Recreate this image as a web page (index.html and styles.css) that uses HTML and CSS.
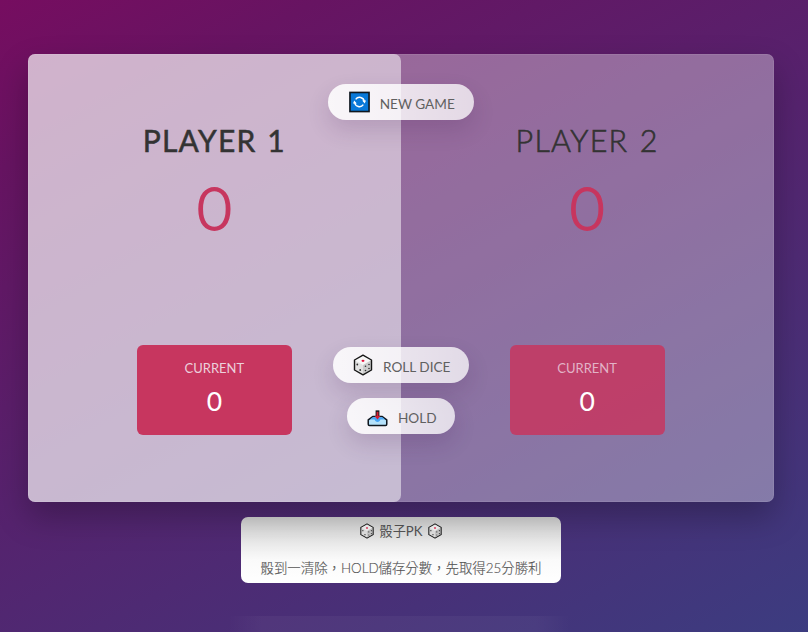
FILE: index.html
```html
<!DOCTYPE html>
<html lang="zh-Hant">
<head>
<meta charset="utf-8">
<title>骰子PK</title>
<link rel="stylesheet" href="styles.css">
</head>
<body>
<svg class="symbols" aria-hidden="true">
  <symbol id="die" viewBox="0 0 20 22">
    <path d="M10 1.2 18.5 6v10L10 20.8 1.5 16V6Z" fill="#f7f7f7"/>
    <path d="M10 11 18.5 6v10L10 20.8Z" fill="#cbcbcb"/>
    <path d="M10 11 1.5 6v10l8.500 4.800Z" fill="#e2e2e2"/>
    <ellipse cx="10" cy="6.800" rx="1.500" ry="1.100" fill="#e3123c"/>
    <g fill="#333"><circle cx="4.300" cy="10.500" r=".9"/><circle cx="7.200" cy="16" r=".9"/><circle cx="12.500" cy="12.300" r=".8"/><circle cx="16" cy="10.500" r=".8"/><circle cx="12.500" cy="16.500" r=".8"/><circle cx="16" cy="14.500" r=".8"/></g>
    <path d="M10 1.2 18.5 6v10L10 20.8 1.5 16V6Z" fill="none" stroke="#161616" stroke-width="1.400" stroke-linejoin="round"/>
  </symbol>
</svg>
<main class="game">
  <section class="player player--active">
    <h2 class="name">PLAYER 1</h2>
    <p class="score">0</p>
    <div class="current"><p class="current-label">CURRENT</p><p class="current-score">0</p></div>
  </section>
  <section class="player">
    <h2 class="name">PLAYER 2</h2>
    <p class="score">0</p>
    <div class="current"><p class="current-label">CURRENT</p><p class="current-score">0</p></div>
  </section>
  <button class="btn btn--new">
    <svg class="icon" viewBox="0 0 22 22"><rect x="1" y="1" width="20" height="20" fill="#0878d8" stroke="#101820" stroke-width="1.700"/><g fill="none" stroke="#fff" stroke-width="1.500"><path d="M7 8.200A5 5 0 0 1 16 10.500"/><path d="M15 13.800A5 5 0 0 1 6 11.500"/></g><path d="M17.800 9.300h-4l2.700 3.400ZM4.200 12.700h4L5.500 9.300Z" fill="#fff"/></svg>
    <span>NEW GAME</span>
  </button>
  <button class="btn btn--roll"><svg class="icon icon--die"><use href="#die"/></svg><span>ROLL DICE</span></button>
  <button class="btn btn--hold">
    <svg class="icon icon--tray" viewBox="0 0 22 22"><path d="M6 9.500h10l4.700 3.500v4.500q0 1.300-1.300 1.300H2.600q-1.300 0-1.300-1.300V13Z" fill="#b5e2fb" stroke="#101820" stroke-width="1.600" stroke-linejoin="round"/><path d="M6 10.300h10l3 2.300h-5c-.6 3.300-5.400 3.300-6 0H3Z" fill="#46a5f5"/><path d="M11 3v6" stroke="#15191d" stroke-width="4"/><path d="M11 4.500v6" stroke="#d51f35" stroke-width="2"/><path d="M8 9h6l-3 3.500Z" fill="#d51f35"/></svg>
    <span>HOLD</span>
  </button>
</main>
<section class="rules">
  <p class="rules-title"><svg class="mini"><use href="#die"/></svg><span>骰子PK</span><svg class="mini"><use href="#die"/></svg></p>
  <p class="rules-text">骰到一清除，HOLD儲存分數，先取得25分勝利</p>
</section>
<div class="dock"></div>
</body>
</html>
```
FILE: styles.css
```css
* { box-sizing: border-box; margin: 0; padding: 0; }
body {
  width: 808px;
  height: 632px;
  padding: 54px 0 0 28px;
  overflow: hidden;
  color: #333;
  font-family: Lato, "Noto Sans CJK TC", sans-serif;
  background: linear-gradient(152deg, #760d60 0%, #671462 16%, #55236e 50%, #3c3c80 100%);
}
.symbols { position: absolute; width: 0; height: 0; }
.game {
  position: relative;
  display: flex;
  width: 745.5px;
  height: 447.5px;
  border-radius: 7px;
  background: rgba(255, 255, 255, .35);
  box-shadow: 0 15px 32px rgba(0, 0, 0, .25), inset 0 0 0 1px rgba(255, 255, 255, .08);
}
.player {
  flex: 1;
  display: flex;
  flex-direction: column;
  align-items: center;
  padding: 65px 0 67px;
  border-radius: 7px;
}
.player--active { background: rgba(255, 255, 255, .51); }
.name {
  height: 42px;
  line-height: 42px;
  font-size: 30.5px;
  font-weight: 300;
  letter-spacing: 1.2px;
  word-spacing: 2px;
  -webkit-text-stroke: .6px #333;
}
.player--active .name { font-weight: 400; font-size: 30px; -webkit-text-stroke: .5px #333; }
.score {
  margin-top: 10px;
  height: 72px;
  line-height: 72px;
  font-size: 60px;
  font-weight: 300;
  color: #c7365f;
  -webkit-text-stroke: 1.8px #c7365f;
}
.current {
  width: 155px;
  height: 90px;
  margin-top: auto;
  padding-top: 13px;
  border-radius: 6px;
  color: #fff;
  text-align: center;
  background: #c7365f;
}
.player:not(.player--active) .current { background: rgba(199, 54, 95, .85); }
.current-label { height: 20px; line-height: 20px; font-size: 13px; color: #ecd0dc; }
.player:not(.player--active) .current-label { color: #e2b3c7; }
.current-score { margin-top: 5px; height: 36px; line-height: 36px; font-size: 26.5px; }
.btn {
  position: absolute;
  left: 50%;
  transform: translateX(-50%);
  display: flex;
  align-items: center;
  justify-content: center;
  gap: 10px;
  height: 36px;
  padding-left: 2px;
  border: 0;
  border-radius: 18px;
  color: #606060;
  font: 400 13.6px/20px Lato, sans-serif;
  white-space: nowrap;
  background: linear-gradient(90deg, rgba(255, 255, 255, .88), rgba(255, 255, 255, .74));
  box-shadow: 0 10px 22px rgba(60, 25, 80, .16);
}
.btn span { padding-top: 3px; }
.icon { flex: none; width: 21px; height: 22px; }
.icon--die { width: 20px; height: 22px; }
.icon--tray { margin-top: 4px; }
.btn--new { top: 30px; width: 146px; }
.btn--roll { top: 293px; width: 136px; }
.btn--hold { top: 344px; width: 108px; }
.rules {
  width: 320px;
  height: 66px;
  margin: 15px 0 0 213px;
  padding-top: 3px;
  border-radius: 7px;
  color: #555;
  font-size: 13.4px;
  line-height: 22px;
  text-align: center;
  background: linear-gradient(#d3d3d3, #fafafa 65%, #fff);
}
.rules-title { display: flex; align-items: center; justify-content: center; gap: 4px; font-size: 13.2px; }
.mini { width: 16px; height: 16px; }
.rules-text { margin-top: 15px; font-weight: 300; -webkit-text-stroke: .15px #555; white-space: nowrap; }
.dock {
  width: 342px;
  height: 16px;
  margin: 33px 0 0 200px;
  background: linear-gradient(90deg, transparent, rgba(255, 255, 255, .04) 10%, rgba(255, 255, 255, .04) 90%, transparent);
}
```
